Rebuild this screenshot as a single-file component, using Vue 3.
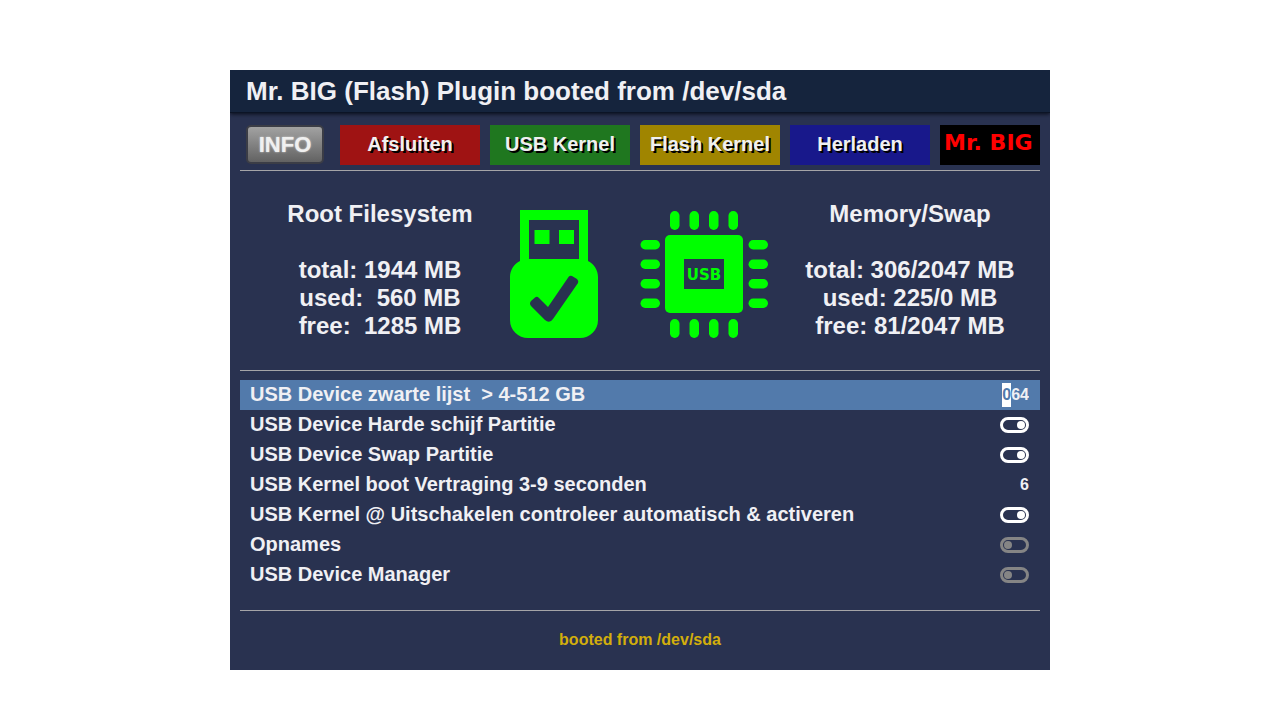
<script setup>
import { onMounted, ref } from 'vue'

const actions = [
  { label: 'Afsluiten', tone: 'red' },
  { label: 'USB Kernel', tone: 'green' },
  { label: 'Flash Kernel', tone: 'yellow' },
  { label: 'Herladen', tone: 'blue' }
]

const rootStats = ['Root Filesystem', '', 'total: 1944 MB', 'used:  560 MB', 'free:  1285 MB'].join('\n')
const memoryStats = ['Memory/Swap', '', 'total: 306/2047 MB', 'used: 225/0 MB', 'free: 81/2047 MB'].join('\n')

const settings = ref([
  { id: 'blacklist', label: 'USB Device zwarte lijst  > 4-512 GB', type: 'text', value: '064' },
  { id: 'harddisk', label: 'USB Device Harde schijf Partitie', type: 'switch', value: true },
  { id: 'swap', label: 'USB Device Swap Partitie', type: 'switch', value: true },
  { id: 'delay', label: 'USB Kernel boot Vertraging 3-9 seconden', type: 'text', value: '6' },
  { id: 'shutdown', label: 'USB Kernel @ Uitschakelen controleer automatisch & activeren', type: 'switch', value: true },
  { id: 'recordings', label: 'Opnames', type: 'switch', value: false },
  { id: 'manager', label: 'USB Device Manager', type: 'switch', value: false }
])

const selected = ref('blacklist')
const list = ref(null)

onMounted(() => {
  const field = list.value.querySelector('#blacklist')
  field.focus()
  field.setSelectionRange(0, 1)
})

const pins = [30, 49.5, 69, 88.5]
</script>

<template>
  <main class="screen">
    <header class="titlebar">
      <h1>Mr. BIG (Flash) Plugin booted from /dev/sda</h1>
    </header>

    <div class="content">
      <nav class="toolbar">
        <button type="button" class="info">INFO</button>
        <button v-for="a in actions" :key="a.label" type="button" class="action" :class="a.tone">{{ a.label }}</button>
        <div class="brand">Mr. BIG</div>
      </nav>

      <section class="status">
        <p class="stats">{{ rootStats }}</p>
        <div class="icons">
          <svg class="stick" viewBox="0 0 88 128" aria-hidden="true">
            <path fill="#00ff00" fill-rule="evenodd" d="M10 0H78V51C84 54 88 60 88 67V110A18 18 0 0 1 70 128H18A18 18 0 0 1 0 110V67C0 60 4 54 10 51ZM19 10V49H69V10Z" />
            <path fill="#00ff00" d="M24.500 20h15v14h-15zM49 20h15v14H49z" />
            <path fill="#293250" d="M21 91L25 87.500Q27 86 29 88L38 97L58.500 67Q60 65 62 66L67 69Q69 71 68 73L43 109Q39.500 114 35 110L21 96Q19 93.500 21 91Z" />
          </svg>
          <svg class="chip" viewBox="0 0 128 128" aria-hidden="true">
            <rect x="25" y="25" width="78" height="78" rx="5" fill="#00ff00" />
            <rect x="44" y="49" width="40" height="30" fill="#293250" />
            <g fill="#00ff00">
              <template v-for="p in pins" :key="p">
                <rect :x="p" y="1" width="9.500" height="19" rx="4.700" />
                <rect :x="p" y="109" width="9.500" height="19" rx="4.700" />
                <rect x="0.500" :y="p" width="19.500" height="9.500" rx="4.700" />
                <rect x="108.500" :y="p" width="19.500" height="9.500" rx="4.700" />
              </template>
            </g>
            <text x="64" y="70" text-anchor="middle" class="chip-text">USB</text>
          </svg>
        </div>
        <p class="stats">{{ memoryStats }}</p>
      </section>

      <ul ref="list" class="settings">
        <li v-for="s in settings" :key="s.id" class="row" :class="{ active: s.id === selected }">
          <label :for="s.id">{{ s.label }}</label>
          <input v-if="s.type === 'text'" :id="s.id" v-model="s.value" type="text" inputmode="numeric" class="number" @focus="selected = s.id">
          <input v-else :id="s.id" v-model="s.value" type="checkbox" role="switch" class="switch" @focus="selected = s.id">
        </li>
      </ul>

      <footer class="message">booted from /dev/sda</footer>
    </div>
  </main>
</template>

<style>
body {
  background: #ffffff;
}
</style>

<style scoped>
.screen {
  box-sizing: border-box;
  width: calc(100% - 40px);
  max-width: 820px;
  margin: 70px auto 0;
  background: #293250;
  color: #f0f0f4;
  font-family: "Liberation Sans", Arial, sans-serif;
  font-weight: bold;
}
.titlebar {
  position: relative;
  padding: 0 16px;
  background: #15243d;
  border-bottom: 1px solid #0c1426;
  box-shadow: 0 1px 4px #080c18;
  clip-path: inset(0 0 -8px 0);
}
h1 {
  margin: 0;
  font-size: 26px;
  line-height: 42px;
}
.content {
  padding: 12px 10px 0;
}
.toolbar {
  display: flex;
  gap: 10px;
  height: 40px;
  padding-bottom: 5px;
  border-bottom: 1px solid #a5a5a8;
}
button {
  padding: 0;
  border: 0;
  color: #f0f0f0;
  font-family: inherit;
  font-weight: bold;
}
.info {
  width: 78px;
  height: 39px;
  margin: 0 6px;
  border: 2px solid #3b3d46;
  border-radius: 5px;
  background: linear-gradient(#a2a2a2, #626262);
  font-size: 22px;
  text-shadow: 0 0 2px #dddddd;
}
.action {
  flex: 1;
  padding-bottom: 2px;
  font-size: 20px;
  text-shadow: 2px 2px #000000;
}
.red { background: #9f1313; }
.green { background: #1f771f; }
.yellow { background: #a08500; }
.blue { background: #18188b; }
.brand {
  width: 100px;
  box-sizing: border-box;
  padding-left: 4px;
  background: #000000;
  color: #ff0000;
  font-family: "DejaVu Sans", sans-serif;
  font-size: 22px;
  line-height: 36px;
  white-space: nowrap;
}
.status {
  display: flex;
  padding: 29px 0 30px 10px;
  border-bottom: 1px solid #a5a5a8;
}
.stats {
  flex: 1;
  margin: 0;
  font-size: 24px;
  line-height: 28px;
  text-align: center;
  white-space: pre;
}
.icons {
  display: flex;
  gap: 42px;
  margin: 10px 12px 0 0;
}
.stick {
  width: 88px;
  height: 128px;
}
.chip {
  width: 128px;
  height: 128px;
}
.chip-text {
  fill: #00ff00;
  font-family: "DejaVu Sans", sans-serif;
  font-size: 15px;
  font-weight: bold;
}
.settings {
  margin: 0;
  padding: 9px 0 20px;
  list-style: none;
  border-bottom: 1px solid #a5a5a8;
}
.row {
  display: flex;
  align-items: center;
  height: 30px;
  padding: 0 11px 0 10px;
}
.row.active {
  background: #527aab;
}
label {
  flex: 1;
  padding-bottom: 2px;
  font-size: 20px;
  line-height: 28px;
  white-space: pre;
}
.number {
  width: 60px;
  padding: 0;
  border: 0;
  outline: 0;
  background: transparent;
  color: inherit;
  font-family: inherit;
  font-size: 16px;
  font-weight: bold;
  line-height: 24px;
  text-align: right;
}
.number::selection {
  background: #ffffff;
  color: #527aab;
}
.switch {
  appearance: none;
  box-sizing: border-box;
  display: flex;
  align-items: center;
  width: 29px;
  height: 16px;
  margin: 0;
  padding: 0 1px;
  border: 3px solid #858585;
  border-radius: 8px;
  color: #858585;
}
.switch::before {
  content: "";
  width: 8px;
  height: 8px;
  border-radius: 4px;
  background: currentColor;
}
.switch:checked {
  justify-content: flex-end;
  border-color: #ffffff;
  color: #ffffff;
}
.message {
  padding-bottom: 2px;
  color: #d2ae0c;
  font-size: 16px;
  line-height: 57px;
  text-align: center;
}
</style>
